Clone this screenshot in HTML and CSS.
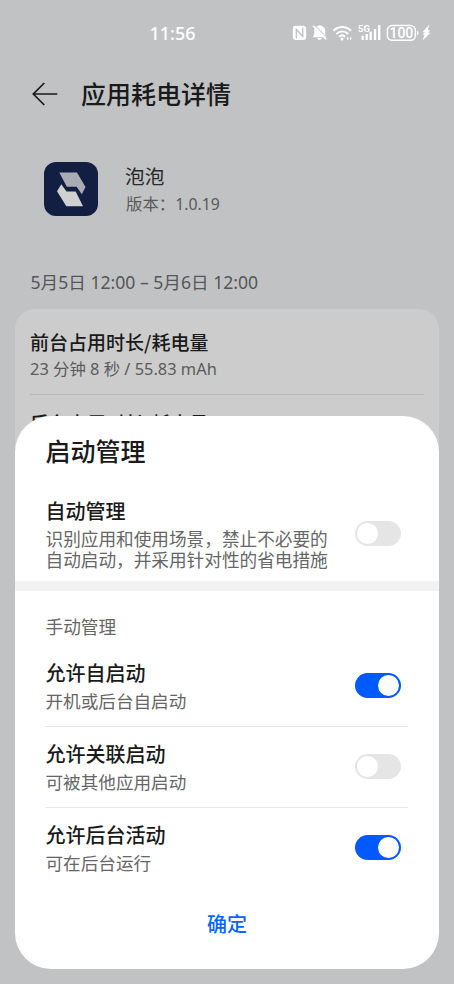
FILE: index.html
```html
<!DOCTYPE html>
<html lang="zh-CN">
<head>
<meta charset="utf-8">
<title>应用耗电详情</title>
<link rel="stylesheet" href="styles.css">
</head>
<body>
<div class="screen">
  <div class="status">
    <span class="clock">11:56</span>
    <svg class="indicators" width="140" height="20" viewBox="0 0 140 20" fill="none">
      <rect x="0.8" y="2.800" width="13.4" height="14.2" rx="3.2" fill="#fff"/>
      <path d="M4.300 15.300V6.300L10.700 13.500V4.500" stroke="#c1c2c4" stroke-width="1.300"/>
      <path d="M27.500 2.200c3.800.4 5.700 2.800 5.700 5.800v3.500l1.200 2.800H20.800l1.400-2.800V8c0-3 1.500-5.400 5.300-5.800z" fill="#fff"/>
      <path d="M25.200 15h4.600c-.6 2.500-4 2.500-4.600 0z" fill="#fff"/>
      <path d="M23 2.300L35.800 15.500" stroke="#c1c2c4" stroke-width="1"/>
      <path d="M21.200 2.800L34.300 16.400" stroke="#fff" stroke-width="1.800"/>
      <path d="M41.500 7.700c5-4.900 12.500-4.900 17.500 0M44.300 10.900c3.600-3.300 8.400-3.300 12 0M47.200 13.800c2-1.700 4.200-1.700 6 0" stroke="#fff" stroke-width="2.100"/>
      <circle cx="50" cy="16" r="1.500" fill="#fff"/>
      <path d="M54.500 15.500l1.800-2v4zM59.800 15.500l-1.800-2v4z" fill="#fff"/>
      <path d="M70.700 17v-4.200M74.700 17v-6M78.700 17V8.700M83 17V6M87.200 17V2" stroke="#fff" stroke-width="2.300"/>
      <text class="network" x="66" y="9">5G</text>
      <rect x="95.400" y="2.500" width="28" height="14.800" rx="4.800" stroke="#fff" stroke-width="1.400"/>
      <text class="charge" x="109.400" y="14.800" text-anchor="middle">100</text>
      <path d="M125 7.800v4.400c2-.5 2-3.900 0-4.400z" fill="#fff"/>
      <path d="M137.400 1.500l-7 7.800h2.500l-2.300 2.500h2l-2.200 6 8-8h-2.400l2.300-2.600h-2.600z" fill="#fff"/>
    </svg>
  </div>
  <header class="header">
    <svg width="26" height="24" viewBox="0 0 26 24" fill="none" stroke="#1a1a1a" stroke-width="1.700"><path d="M25.300 12H1.500M12.300 1L1.300 12l11 11"/></svg>
    <h1 class="page-title">应用耗电详情</h1>
  </header>
  <section class="app">
    <svg width="54" height="54" viewBox="0 0 54 54">
      <rect width="54" height="54" rx="12" fill="#121e42"/>
      <path d="M15.300 10.500H33l8.500 14.500-3.700 7.300-5.200-7.500H22.800z" fill="#a9abb5"/>
      <path d="M17.300 22.300l5.200 7.300h9.200L39 44.300H22.300L13 29.200z" fill="#d0d0d1"/>
    </svg>
    <div class="app-text">
      <div class="app-name">泡泡</div>
      <div class="app-version">版本：<span class="version-number">1.0.19</span></div>
    </div>
  </section>
  <div class="period">5月5日 12:00 – 5月6日 12:00</div>
  <section class="card">
    <div class="usage">
      <div class="usage-title">前台占用时长/耗电量</div>
      <div class="usage-value">23 分钟 8 秒 / 55.83 mAh</div>
    </div>
    <div class="usage">
      <div class="usage-title">后台占用时长/耗电量</div>
    </div>
  </section>
  <section class="sheet">
    <h2 class="sheet-title">启动管理</h2>
    <div class="auto">
      <div>
        <div class="label">自动管理</div>
        <div class="auto-note">识别应用和使用场景，禁止不必要的<br>自动启动，并采用针对性的省电措施</div>
      </div>
      <span class="toggle"></span>
    </div>
    <div class="band"></div>
    <div class="group">手动管理</div>
    <div class="options">
      <div class="option"><div class="option-text"><div class="label">允许自启动</div><div class="note">开机或后台自启动</div></div><span class="toggle on"></span></div>
      <div class="option"><div class="option-text"><div class="label">允许关联启动</div><div class="note">可被其他应用启动</div></div><span class="toggle"></span></div>
      <div class="option"><div class="option-text"><div class="label">允许后台活动</div><div class="note">可在后台运行</div></div><span class="toggle on"></span></div>
    </div>
    <div class="confirm">确定</div>
  </section>
</div>
</body>
</html>
```
FILE: styles.css
```css
* { box-sizing: border-box; }
body { margin: 0; font-family: "Noto Sans CJK SC", sans-serif; color: #1a1a1a; }
h1, h2 { margin: 0; }
.screen { position: relative; width: 454px; height: 984px; overflow: hidden; background: #c1c2c4; }
.status { display: flex; align-items: center; justify-content: space-between; height: 66px; padding: 0 22px 0 149.5px; color: #fff; }
.clock { font: 500 18px/24px "Noto Sans", sans-serif; }
.network { font: 700 9.5px Roboto, sans-serif; fill: #fff; }
.charge { font: 500 14px Roboto, sans-serif; fill: #fff; }
.header { display: flex; align-items: center; gap: 23px; height: 55px; padding-left: 32px; }
.page-title { font-size: 25px; line-height: 36px; font-weight: 500; margin-bottom: 2px; }
.app { display: flex; gap: 27.5px; padding: 41px 0 0 43.5px; }
.app-name { font-size: 19.7px; line-height: 28px; color: #2a2a2a; }
.app-version { padding-left: 1px; font-size: 16.4px; line-height: 26px; color: #5a5a5b; }
.version-number { font: 15.8px/20px "Noto Sans", sans-serif; }
.period { margin-top: 54px; padding-left: 30.5px; font: 17.6px/24px "Noto Sans", "Noto Sans CJK SC", sans-serif; color: #555657; }
.card { margin: 15px 15px 0; padding: 0 15px; height: 500px; border-radius: 20px; background: #ccc; }
.usage { height: 86px; padding-top: 19px; border-bottom: 1px solid #b7b7b7; }
.usage + .usage { padding-top: 14px; border-bottom: 0; }
.usage-title { font-size: 19px; line-height: 28px; font-weight: 500; }
.usage-value { font: 16.4px/26px "Noto Sans", "Noto Sans CJK SC", sans-serif; color: #5b5b5b; }
.sheet { position: absolute; left: 15px; top: 415.5px; width: 424px; height: 553.5px; padding-top: 16.5px; border-radius: 36px; background: #fff; }
.sheet-title { padding-left: 30.5px; font-size: 25px; line-height: 36px; font-weight: 500; }
.auto { display: flex; align-items: center; justify-content: space-between; height: 97px; margin-top: 16px; padding: 1px 38px 0 30.5px; }
.label { font-size: 20px; line-height: 28px; font-weight: 500; }
.auto-note { margin-top: 3px; font-size: 17.65px; line-height: 21px; color: #666; white-space: nowrap; }
.band { height: 10px; background: #f2f2f2; }
.group { padding: 24px 0 0 30.5px; font-size: 17.65px; line-height: 24px; color: #666; }
.options { margin: 7px 31px 0 30px; }
.option { display: flex; align-items: center; justify-content: space-between; height: 81px; padding-right: 7px; border-bottom: 1px solid #e9e9e9; }
.option:last-child { border-bottom-color: transparent; }
.option-text { padding: 2px 0 0 0.5px; }
.note { font-size: 17.6px; line-height: 28px; color: #666; }
.toggle { flex: none; width: 46px; height: 25px; padding: 2px; border-radius: 13px; background: #e5e5e5; }
.option .toggle { margin-bottom: 2px; }
.toggle::before { content: ""; display: block; width: 21px; height: 21px; border-radius: 50%; background: #fff; }
.on { background: #005aff; }
.on::before { margin-left: 21px; }
.confirm { margin-top: 20px; font-size: 20px; line-height: 30px; font-weight: 500; text-align: center; color: #0a62ff; }
```
